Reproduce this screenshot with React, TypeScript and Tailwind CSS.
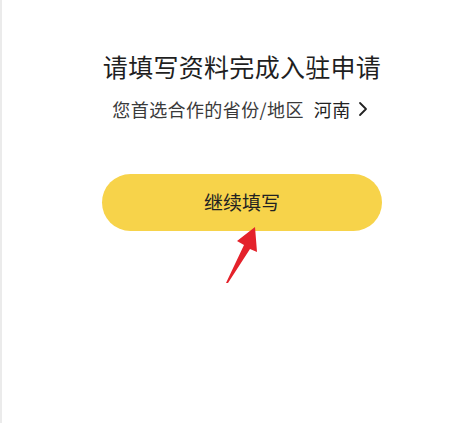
// Onboarding prompt: title, chosen province row, yellow "continue" button,
// plus the red annotation arrow that sits over the button.
export default function App() {
  return (
    <div
      className="relative h-[423px] w-full overflow-hidden border-l-2 border-[#ebebeb] bg-white pl-[9px]"
      style={{ fontFamily: '"Noto Sans CJK SC", "Noto Sans", sans-serif' }}
    >
      <div className="flex flex-col items-center pt-[50px]">
        {/* Title */}
        <h1 className="text-[25px] leading-[32px] font-normal tracking-[0.3px] text-[#1f1f1f]">
          请填写资料完成入驻申请
        </h1>

        {/* Province row */}
        <div className="mt-[15px] flex items-center pr-[4px] text-[18px] leading-[24px] tracking-[0.4px] text-[#3a3a3a]">
          <span>您首选合作的省份/地区</span>
          <span className="ml-[10px] text-[#222]">河南</span>
          <svg
            className="ml-[7px]"
            width="10"
            height="16"
            viewBox="0 0 10 16"
            fill="none"
            stroke="#222"
            strokeWidth="1.8"
            strokeLinecap="round"
            strokeLinejoin="round"
          >
            <path d="M2 2l6 6-6 6" />
          </svg>
        </div>

        {/* Continue button */}
        <button className="mt-[53px] flex h-[57px] w-[280px] items-center justify-center rounded-full bg-[#f7d34a] text-[19px] text-[#222]">
          继续填写
        </button>
      </div>

      {/* Annotation arrow */}
      <svg
        className="absolute left-[218px] top-[224px]"
        width="42"
        height="62"
        viewBox="0 0 42 62"
      >
        <polygon
          points="35,3 17,17 24,21 6,59 8,59 30,25 37,28"
          fill="#e4222b"
        />
      </svg>
    </div>
  );
}
